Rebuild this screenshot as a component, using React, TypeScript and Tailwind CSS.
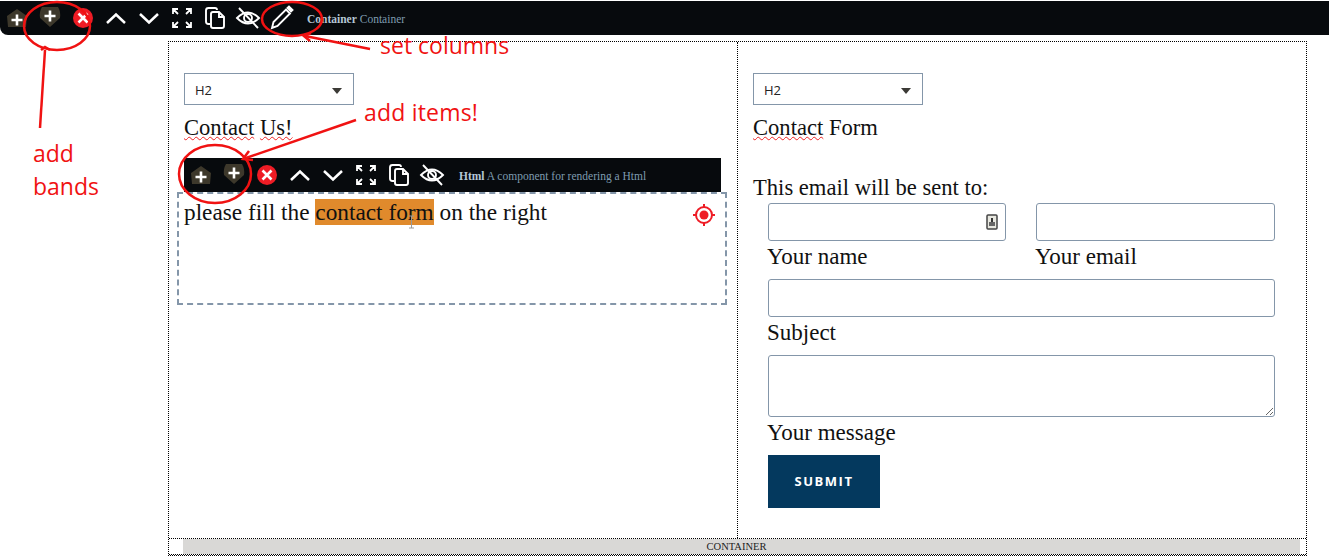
import type { ReactNode } from 'react';

const serif = "font-['Liberation_Serif',serif]";
const hand = "absolute font-['Open_Sans',sans-serif] text-[23px] font-medium leading-none text-[#f01212]";

function AddUp() {
  return (
    <svg width="32" height="32" viewBox="0 0 32 32">
      <path d="M16 7 L26 14 L25 25 L7 25 L6 14 Z" fill="#3d382b" />
      <path d="M16 12.5 V23.5 M10.5 18 H21.5" stroke="#fff" strokeWidth="2.6" />
    </svg>
  );
}

function AddDown() {
  return (
    <svg width="32" height="32" viewBox="0 0 32 32">
      <path d="M8 5 H24 Q27 10 26 16 L16 25 L6 16 Q5 10 8 5 Z" fill="#3d382b" />
      <path d="M16 8.5 V19.5 M10.5 14 H21.5" stroke="#fff" strokeWidth="2.6" />
    </svg>
  );
}

function Remove() {
  return (
    <svg width="32" height="32" viewBox="0 0 32 32">
      <circle cx="16" cy="16" r="10" fill="#ee1c25" />
      <path d="M11.5 11.5 L20.5 20.5 M20.5 11.5 L11.5 20.5" stroke="#fff" strokeWidth="2.6" />
    </svg>
  );
}

function Up() {
  return (
    <svg width="32" height="32" viewBox="0 0 32 32" fill="none">
      <path d="M7 21 L16 12.5 L25 21" stroke="#fff" strokeWidth="2.5" />
    </svg>
  );
}

function Down() {
  return (
    <svg width="32" height="32" viewBox="0 0 32 32" fill="none">
      <path d="M7 12 L16 20.5 L25 12" stroke="#fff" strokeWidth="2.5" />
    </svg>
  );
}

function Expand() {
  return (
    <svg width="32" height="32" viewBox="0 0 32 32" fill="none" stroke="#fff" strokeWidth="1.8">
      <path d="M7 12 V7 H12 M7 7 L12 12 M20 7 H25 V12 M25 7 L20 12 M7 20 V25 H12 M7 25 L12 20 M25 20 V25 H20 M25 25 L20 20" />
    </svg>
  );
}

function Copy() {
  return (
    <svg width="32" height="32" viewBox="0 0 32 32" fill="none" stroke="#fff" strokeWidth="1.9">
      <path d="M11 22 H9.5 Q7 22 7 19.5 V8.5 Q7 6 9.5 6 H16 Q18 6 18 8" />
      <path d="M12 12 Q12 10 14 10 H20 L25 15 V24 Q25 26 23 26 H14 Q12 26 12 24 Z" />
      <path d="M20 10 V15 H25" />
    </svg>
  );
}

function EyeOff() {
  return (
    <svg width="32" height="32" viewBox="0 0 32 32" fill="none" stroke="#fff" strokeWidth="1.9">
      <path d="M5 16 Q16 5 27 16 Q16 27 5 16 Z" />
      <circle cx="16" cy="16" r="4" />
      <path d="M7 6 L26 26" />
    </svg>
  );
}

function Pencil() {
  return (
    <svg width="32" height="32" viewBox="0 0 32 32" fill="none" stroke="#fff" strokeWidth="1.9">
      <path d="M7 26 L8.5 20 L21 7.5 L25 11.5 L12.5 24 Z" />
      <path d="M22.5 6 L24 4.5 L27.5 8 L26 9.5 Z" fill="#fff" />
    </svg>
  );
}

function Cell({ children }: { children: ReactNode }) {
  return <div className="flex h-[32px] w-[33px] shrink-0 items-center justify-center">{children}</div>;
}

function Select() {
  return (
    <div className="flex h-[32px] w-[170px] items-center justify-between border border-[#8496a9] bg-white pl-[10px] pr-[11px] pt-[3px] font-['Open_Sans',sans-serif] text-[13px] text-[#222]">
      H2
      <span className="h-0 w-0 border-x-[5px] border-t-[6px] border-x-transparent border-t-[#3b3a36]" />
    </div>
  );
}

function Heading({ first, rest, wavyRest }: { first: string; rest: string; wavyRest?: boolean }) {
  return (
    <h2 className={`${serif} mt-[9px] text-[22.6px] leading-[28px] text-[#111]`}>
      <span className="underline decoration-[#e22] decoration-wavy decoration-1">{first}</span>{' '}
      <span className={wavyRest ? 'underline decoration-[#e22] decoration-wavy decoration-1' : ''}>{rest}</span>
    </h2>
  );
}

function Field({ label, className, icon }: { label: string; className: string; icon?: boolean }) {
  return (
    <div className={className}>
      <div className="relative">
        <input className="block h-[38px] w-full rounded-[3px] border border-[#8496a9] bg-white" />
        {icon && (
          <svg className="absolute right-[8px] top-[11px]" width="12" height="16" viewBox="0 0 12 16">
            <rect x="1" y="1" width="10" height="14" rx="1" fill="#e8e8e0" stroke="#444" strokeWidth="1.5" />
            <rect x="5" y="4" width="2" height="4" fill="#333" />
            <rect x="3" y="8" width="6" height="4" fill="#666" />
          </svg>
        )}
      </div>
      <label className={`${serif} -ml-px mt-[3px] block text-[23px] leading-[26px] text-[#111]`}>{label}</label>
    </div>
  );
}

export default function App() {
  return (
    <div className="relative h-[560px] w-[1329px] overflow-hidden bg-white">
      {/* top toolbar */}
      <div className="mt-px flex h-[34px] items-center rounded-bl-[8px] bg-[#070a0d]">
        <Cell><AddUp /></Cell>
        <Cell><AddDown /></Cell>
        <Cell><Remove /></Cell>
        <Cell><Up /></Cell>
        <Cell><Down /></Cell>
        <Cell><Expand /></Cell>
        <Cell><Copy /></Cell>
        <Cell><EyeOff /></Cell>
        <Cell><Pencil /></Cell>
        <span className={`${serif} ml-[10px] pt-[3px] text-[11.5px] text-[#7f9cb0]`}>
          <b className="text-[#b5c7d6]">Container</b> Container
        </span>
      </div>

      {/* container */}
      <div className="ml-[168px] mt-[6px] w-[1139px] border border-dotted border-black">
        <div className="grid h-[496px] grid-cols-[569px_1fr]">
          {/* left column */}
          <div className="border-r border-dotted border-black pl-[15px] pt-[31px]">
            <Select />
            <Heading first="Contact" rest="Us!" wavyRest />
            <div className="mt-[16px] flex h-[34px] w-[537px] items-center bg-[#070a0d]">
              <Cell><AddUp /></Cell>
              <Cell><AddDown /></Cell>
              <Cell><Remove /></Cell>
              <Cell><Up /></Cell>
              <Cell><Down /></Cell>
              <Cell><Expand /></Cell>
              <Cell><Copy /></Cell>
              <Cell><EyeOff /></Cell>
              <span className={`${serif} ml-[11px] pt-[3px] text-[11.5px] text-[#7f9cb0]`}>
                <b className="text-[#b5c7d6]">Html</b> A component for rendering a Html
              </span>
            </div>
            <div className="relative -ml-[7px] h-[113px] w-[550px] border-2 border-dashed border-[#8496a9] pl-[5px] pt-[6px]">
              <p className={`${serif} text-[23.3px] leading-[25px] text-[#111]`}>
                please fill the <span className="bg-[#e08a2c]">contact form</span> on the right
              </p>
              <svg className="absolute right-[9px] top-[9px]" width="24" height="24" viewBox="0 0 24 24" fill="none" stroke="#ee1c25">
                <circle cx="12" cy="12" r="8" strokeWidth="2" />
                <circle cx="12" cy="12" r="4.5" fill="#ee1c25" stroke="none" />
                <path d="M12 1 V5 M12 19 V23 M1 12 H5 M19 12 H23" strokeWidth="2" />
              </svg>
              <svg className="absolute left-[229px] top-[21px]" width="7" height="14" viewBox="0 0 7 14" fill="none" stroke="#999">
                <path d="M1 1 H6 M3.5 1 V13 M1 13 H6" />
              </svg>
            </div>
          </div>

          {/* right column */}
          <div className="pl-[15px] pt-[31px]">
            <Select />
            <Heading first="Contact" rest="Form" />
            <p className={`${serif} mt-[32px] text-[22.6px] leading-[28px] text-[#111]`}>This email will be sent to:</p>
            <div className="ml-[15px] mt-px w-[507px]">
              <div className="flex gap-[30px]">
                <Field label="Your name" className="w-[238px]" icon />
                <Field label="Your email" className="w-[239px]" />
              </div>
              <Field label="Subject" className="mt-[9px]" />
              <div className="mt-[9px]">
                <textarea className="block h-[62px] w-full rounded-[3px] border border-[#8496a9] bg-white" />
                <label className={`${serif} -ml-px mt-[2px] block text-[23px] leading-[28px] text-[#111]`}>Your message</label>
              </div>
              <button className="mt-[8px] h-[53px] w-[112px] bg-[#04395e] font-['Open_Sans',sans-serif] text-[13px] font-bold tracking-[1.5px] text-white">
                SUBMIT
              </button>
            </div>
          </div>
        </div>

        {/* footer label */}
        <div className="flex h-[17px] border-y border-dotted border-black pl-[14px] pr-[6px]">
          <div className={`${serif} flex flex-1 items-center justify-center bg-[#d9d8d6] pr-[10px] text-[10.5px] text-[#222]`}>CONTAINER</div>
        </div>
      </div>

      {/* red annotations drawn over the screenshot */}
      <svg className="pointer-events-none absolute inset-0" width="1329" height="560" fill="none" stroke="#f01212" strokeWidth="2.5">
        <ellipse cx="57" cy="26" rx="33" ry="24" />
        <ellipse cx="292" cy="19" rx="30" ry="17" />
        <ellipse cx="215" cy="174" rx="36" ry="29" />
        <path d="M40 128 L45 50" />
        <path d="M41 50 L45 47 L50 50" />
        <path d="M370 49 L305 36" />
        <path d="M311 33 L304 36 L310 41" />
        <path d="M356 120 L246 158" />
        <path d="M249 151 L243 159 L253 160" />
      </svg>
      <span className={`${hand} left-[380px] top-[34px]`}>set columns</span>
      <span className={`${hand} left-[364px] top-[101px] tracking-[0.2px]`}>add items!</span>
      <span className={`${hand} left-[33px] top-[142px]`}>add</span>
      <span className={`${hand} left-[33px] top-[175px]`}>bands</span>
    </div>
  );
}
